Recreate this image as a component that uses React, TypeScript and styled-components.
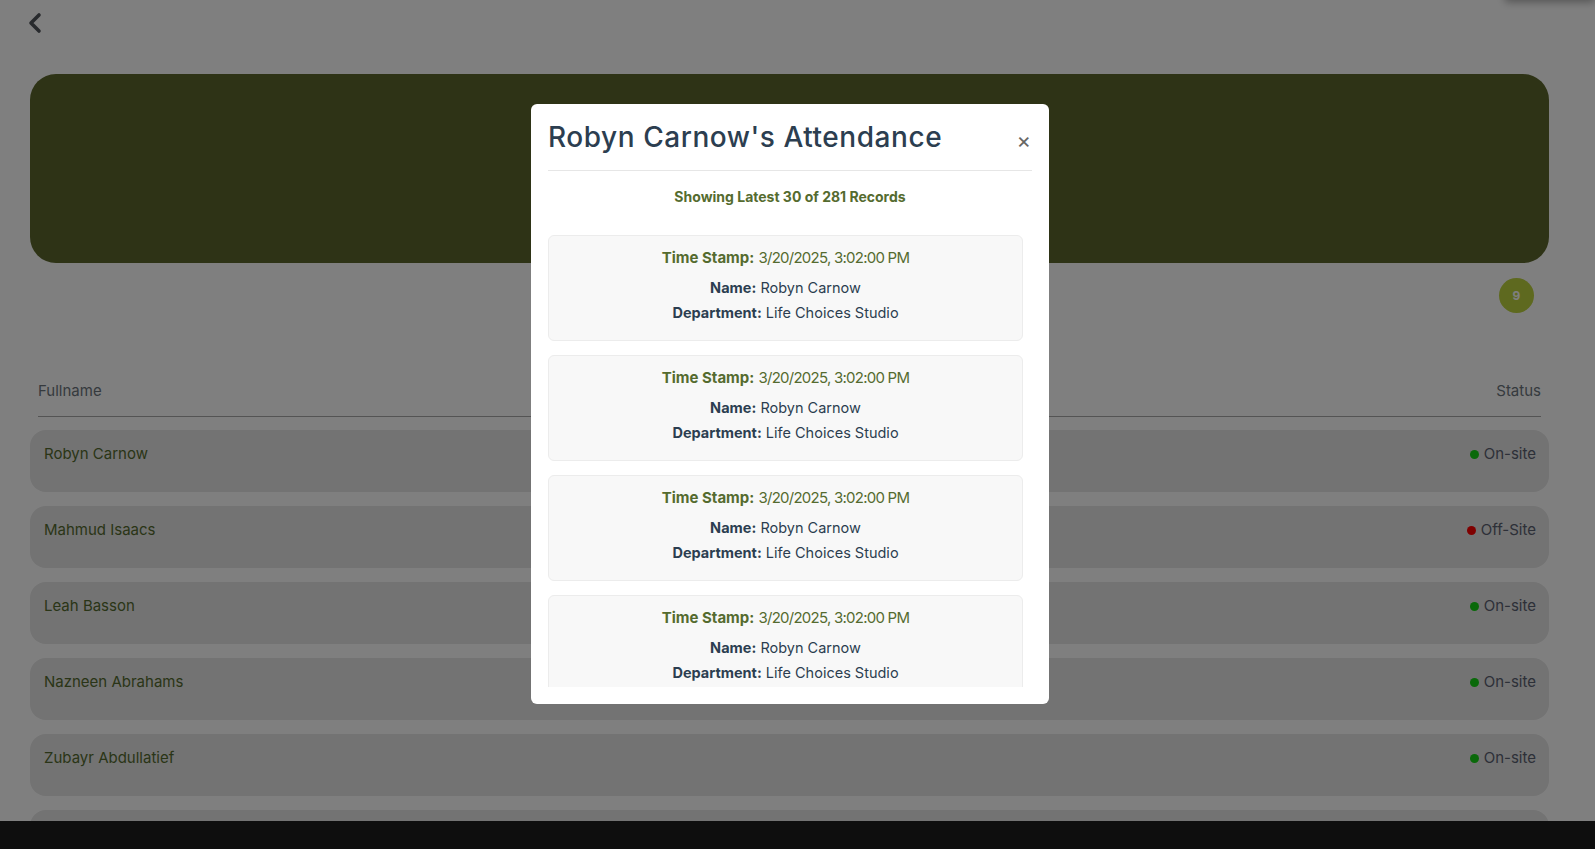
import React from "react";
import styled, { createGlobalStyle } from "styled-components";

const FONT = `"Inter", "Noto Sans", "DejaVu Sans", sans-serif`;

const Global = createGlobalStyle`
  html, body { margin: 0; padding: 0; background: #ffffff; }
  body { font-family: ${FONT}; overflow: hidden; }
  * { box-sizing: border-box; }
`;

const Page = styled.div`
  padding: 12px 46px 0 30px;
  height: 849px;
  overflow: hidden;
`;

const BackButton = styled.button`
  display: block;
  margin-left: -2px;
  padding: 0;
  border: 0;
  background: none;
  width: 14px;
  height: 22px;
  color: #50545a;
  cursor: pointer;
`;

const Banner = styled.section`
  margin-top: 40px;
  height: 189px;
  border-radius: 26px;
  background: #5c662c;
`;

const BadgeRow = styled.div`
  display: flex;
  justify-content: flex-end;
  padding-right: 15px;
  margin-top: 15px;
`;

const CountBadge = styled.div`
  width: 35px;
  height: 35px;
  border-radius: 50%;
  background: #bcd23e;
  color: #ffffff;
  font-size: 12px;
  font-weight: 700;
  display: flex;
  align-items: center;
  justify-content: center;
`;

const TableHead = styled.div`
  margin: 67px 8px 0;
  padding-bottom: 14px;
  border-bottom: 1px solid #a8a8a8;
  display: flex;
  justify-content: space-between;
  font-size: 15px;
  line-height: 22px;
  color: #6c757d;
`;

const Rows = styled.div`
  margin-top: 13px;
  display: flex;
  flex-direction: column;
  gap: 14px;
`;

const Row = styled.div`
  height: 62px;
  flex-shrink: 0;
  border-radius: 16px;
  background: #e6e6e6;
  padding: 12px 13px 0 14px;
  display: flex;
  justify-content: space-between;
  align-items: flex-start;
  font-size: 15px;
  line-height: 24px;
`;

const RowName = styled.span`
  color: #556b2f;
`;

const Status = styled.span`
  display: flex;
  align-items: center;
  gap: 5px;
  color: #5a6070;
`;

const Dot = styled.span<{ $on: boolean }>`
  width: 9px;
  height: 9px;
  border-radius: 50%;
  background: ${(p) => (p.$on ? "#14d214" : "#ff0000")};
`;

const Footer = styled.footer`
  position: fixed;
  left: 0;
  right: 0;
  bottom: 0;
  height: 28px;
  background: #1c1c1c;
`;

const TopShade = styled.div`
  position: fixed;
  top: -20px;
  right: 0;
  width: 90px;
  height: 20px;
  box-shadow: 0 2px 8px rgba(0, 0, 0, 0.35);
  background: #ffffff;
`;

const Overlay = styled.div`
  position: fixed;
  inset: 0;
  background: rgba(0, 0, 0, 0.5);
  display: flex;
  justify-content: center;
  align-items: flex-start;
  padding: 104px 15px 0 0;
`;

const Modal = styled.div`
  width: 518px;
  background: #ffffff;
  border-radius: 6px;
  padding: 0 17px 17px;
  display: flex;
  flex-direction: column;
`;

const ModalHeader = styled.div`
  height: 67px;
  border-bottom: 1px solid #e6e6e6;
  display: flex;
  justify-content: space-between;
  align-items: center;
`;

const Title = styled.h2`
  margin: 0;
  font-size: 28px;
  line-height: 42px;
  font-weight: 500;
  letter-spacing: 0.55px;
  color: #2c3e50;
`;

const CloseButton = styled.button`
  border: 0;
  background: none;
  padding: 0 1px 0 0;
  margin-top: 5px;
  font-size: 22px;
  line-height: 20px;
  font-weight: 400;
  color: #666;
  font-family: ${FONT};
  cursor: pointer;
`;

const Subtitle = styled.p`
  margin: 16px 0 0;
  text-align: center;
  font-size: 14px;
  line-height: 20px;
  font-weight: 700;
  color: #556b2f;
`;

const RecordList = styled.div`
  margin-top: 28px;
  height: 452px;
  overflow: hidden;
  padding-right: 9px;
  display: flex;
  flex-direction: column;
  gap: 14px;
`;

const Card = styled.div`
  height: 106px;
  flex-shrink: 0;
  border: 1px solid #ececec;
  border-radius: 6px;
  background: #f8f8f8;
  padding-top: 11px;
  text-align: center;
`;

const Line = styled.p<{ $stamp?: boolean }>`
  margin: 0;
  font-size: ${(p) => (p.$stamp ? "15px" : "14.5px")};
  line-height: ${(p) => (p.$stamp ? "22px" : "25px")};
  color: ${(p) => (p.$stamp ? "#556b2f" : "#2c3e50")};
  &:nth-child(2) {
    margin-top: 5.5px;
  }
`;

const Label = styled.strong`
  font-weight: 700;
`;

const StampValue = styled.span`
  letter-spacing: -0.75px;
`;

const people = [
  { name: "Robyn Carnow", on: true },
  { name: "Mahmud Isaacs", on: false },
  { name: "Leah Basson", on: true },
  { name: "Nazneen Abrahams", on: true },
  { name: "Zubayr Abdullatief", on: true },
  { name: "Aisha Jacobs", on: true },
];

const records = Array.from({ length: 4 }, () => ({
  stamp: "3/20/2025, 3:02:00 PM",
  name: "Robyn Carnow",
  dept: "Life Choices Studio",
}));

export default function App() {
  return (
    <>
      <Global />
      <Page>
        <BackButton aria-label="Back">
          <svg width="14" height="22" viewBox="0 0 14 22" fill="none">
            <polyline
              points="11,3 3,11 11,19"
              stroke="currentColor"
              strokeWidth="3.6"
              strokeLinecap="round"
              strokeLinejoin="round"
            />
          </svg>
        </BackButton>
        <Banner />
        <BadgeRow>
          <CountBadge>9</CountBadge>
        </BadgeRow>
        <TableHead>
          <span>Fullname</span>
          <span>Status</span>
        </TableHead>
        <Rows>
          {people.map((p) => (
            <Row key={p.name}>
              <RowName>{p.name}</RowName>
              <Status>
                <Dot $on={p.on} />
                {p.on ? "On-site" : "Off-Site"}
              </Status>
            </Row>
          ))}
        </Rows>
      </Page>
      <Footer />
      <TopShade />
      <Overlay>
        <Modal>
          <ModalHeader>
            <Title>Robyn Carnow's Attendance</Title>
            <CloseButton aria-label="Close">×</CloseButton>
          </ModalHeader>
          <Subtitle>Showing Latest 30 of 281 Records</Subtitle>
          <RecordList>
            {records.map((r, i) => (
              <Card key={i}>
                <Line $stamp>
                  <Label>Time Stamp:</Label> <StampValue>{r.stamp}</StampValue>
                </Line>
                <Line>
                  <Label>Name:</Label> {r.name}
                </Line>
                <Line>
                  <Label>Department:</Label> {r.dept}
                </Line>
              </Card>
            ))}
          </RecordList>
        </Modal>
      </Overlay>
    </>
  );
}
